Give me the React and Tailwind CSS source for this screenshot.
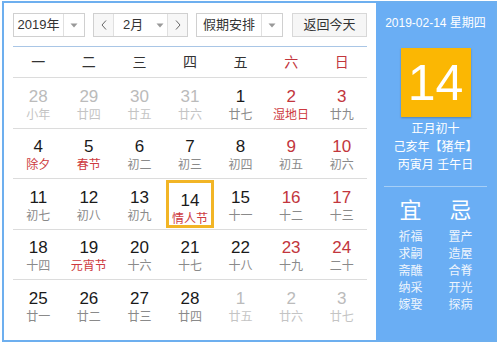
import React from "react";

const FONT = { fontFamily: '"Liberation Sans", "Noto Sans CJK SC", sans-serif' };

const weeks = [
  [["28","小年","o","g"],["29","廿四","o","g"],["30","廿五","o","g"],["31","廿六","o","g"],["1","廿七","n","g"],["2","湿地日","r","r"],["3","廿九","r","g"]],
  [["4","除夕","n","r"],["5","春节","n","r"],["6","初二","n","g"],["7","初三","n","g"],["8","初四","n","g"],["9","初五","r","g"],["10","初六","r","g"]],
  [["11","初七","n","g"],["12","初八","n","g"],["13","初九","n","g"],["14","情人节","n","r",true],["15","十一","n","g"],["16","十二","r","g"],["17","十三","r","g"]],
  [["18","十四","n","g"],["19","元宵节","n","r"],["20","十六","n","g"],["21","十七","n","g"],["22","十八","n","g"],["23","十九","r","g"],["24","二十","r","g"]],
  [["25","廿一","n","g"],["26","廿二","n","g"],["27","廿三","n","g"],["28","廿四","n","g"],["1","廿五","o","o"],["2","廿六","o","o"],["3","廿七","o","o"]],
];

function Arrow() {
  return (
    <svg width="8" height="5" viewBox="0 0 8 5"><path d="M0.5 0.5 L4 4.5 L7.5 0.5 Z" fill="#999" /></svg>
  );
}

function Cell({ d }) {
  const [num, lunar, nc, lc, today] = d;
  const numColor = nc === "o" ? "text-[#bbbbbb]" : nc === "r" ? "text-[#c2363d]" : "text-[#1a1a1a]";
  const lunColor = nc === "o" || lc === "o" ? "text-[#c4c4c4]" : lc === "r" ? "text-[#cd3a40]" : "text-[#8a8a8a]";
  return (
    <div className="flex items-center justify-center">
      <div className={`w-[48px] h-[48px] flex flex-col items-center pt-[8px] ${today ? "border-[3px] border-[#f2b526] pt-[5px]" : ""}`}>
        <div className={`text-[17px] leading-[19px] ${numColor}`}>{num}</div>
        <div className={`text-[12px] leading-[16px] mt-[1px] whitespace-nowrap ${lunColor}`}>{lunar}</div>
      </div>
    </div>
  );
}

export default function App() {
  const days = ["一","二","三","四","五","六","日"];
  const yi = ["祈福","求嗣","斋醮","纳采","嫁娶"];
  const ji = ["置产","造屋","合脊","开光","探病"];
  return (
    <div className="w-[499px] h-[344px] bg-white overflow-hidden" style={FONT}>
      <div className="ml-[2px] mt-[1px] w-[495px] h-[341px] border-2 border-[#6dafef] flex">
        <div className="w-[372px] px-[9px] pt-[10px]">
          <div className="flex h-[24px] text-[13px] text-[#333] whitespace-nowrap">
            <div className="w-[72px] flex border border-[#d0d0d0]">
              <div className="w-[49px] flex items-center justify-center">2019年</div>
              <div className="flex-1 border-l border-[#e0e0e0] flex items-center justify-center"><Arrow /></div>
            </div>
            <div className="w-[95px] ml-[8px] flex border border-[#d0d0d0]">
              <div className="w-[20px] shrink-0 bg-[#f7f7f7] border-r border-[#e0e0e0] flex items-center justify-center">
                <svg width="6" height="10" viewBox="0 0 6 10"><path d="M5 0.5 L1 5 L5 9.5" stroke="#666" fill="none" strokeWidth="1" /></svg>
              </div>
              <div className="flex-1 flex items-center pl-[9px]">
                <span>2月</span>
                <span className="ml-[13px] flex"><Arrow /></span>
              </div>
              <div className="w-[20px] shrink-0 bg-[#f7f7f7] border-l border-[#e0e0e0] flex items-center justify-center">
                <svg width="6" height="10" viewBox="0 0 6 10"><path d="M1 0.5 L5 5 L1 9.5" stroke="#666" fill="none" strokeWidth="1" /></svg>
              </div>
            </div>
            <div className="w-[87px] ml-[8px] flex border border-[#d0d0d0]">
              <div className="w-[64px] flex items-center justify-center">假期安排</div>
              <div className="flex-1 border-l border-[#e0e0e0] flex items-center justify-center"><Arrow /></div>
            </div>
            <div className="w-[75px] ml-[9px] border border-[#d8d8d8] bg-[#f6f6f6] flex items-center justify-center">返回今天</div>
          </div>
          <div className="mt-[9px] border-t border-[#a9c6e6] border-b border-b-[#dcdcdc] h-[32px] grid grid-cols-7 items-center text-[14px]">
            {days.map((d, i) => (
              <div key={d} className={`text-center ${i >= 5 ? "text-[#c2363d]" : "text-[#333]"}`}>{d}</div>
            ))}
          </div>
          {weeks.map((w, i) => (
            <div key={i} className={`grid grid-cols-7 h-[50.5px] ${i < 4 ? "border-b border-[#dcdcdc]" : ""}`}>
              {w.map((d, j) => <Cell key={j} d={d} />)}
            </div>
          ))}
        </div>
        <div className="flex-1 bg-[#6aaef4] flex flex-col items-center text-white pt-[12px]">
          <div className="text-[12px] leading-[16px] whitespace-nowrap">2019-02-14 星期四</div>
          <div className="mt-[17px] w-[70px] h-[69px] bg-[#fbb703] shadow-[0_1px_2px_rgba(0,0,0,0.25)] flex items-center justify-center text-[50px] leading-none">14</div>
          <div className="mt-[3px] text-[12px] leading-[18px] text-center">
            <div>正月初十</div>
            <div>己亥年【猪年】</div>
            <div>丙寅月 壬午日</div>
          </div>
          <div className="mt-[12px] w-[103px] border-t border-[#a6cff7]" />
          <div className="mt-[11px] flex gap-[26px]">
            <div className="flex flex-col items-center w-[24px]">
              <div className="text-[22px] leading-[26px]">宜</div>
              <div className="mt-[5px] text-[12px] leading-[17px] text-[#eef5fd]">
                {yi.map((t) => <div key={t}>{t}</div>)}
              </div>
            </div>
            <div className="flex flex-col items-center w-[24px]">
              <div className="text-[22px] leading-[26px]">忌</div>
              <div className="mt-[5px] text-[12px] leading-[17px] text-[#eef5fd]">
                {ji.map((t) => <div key={t}>{t}</div>)}
              </div>
            </div>
          </div>
        </div>
      </div>
    </div>
  );
}
